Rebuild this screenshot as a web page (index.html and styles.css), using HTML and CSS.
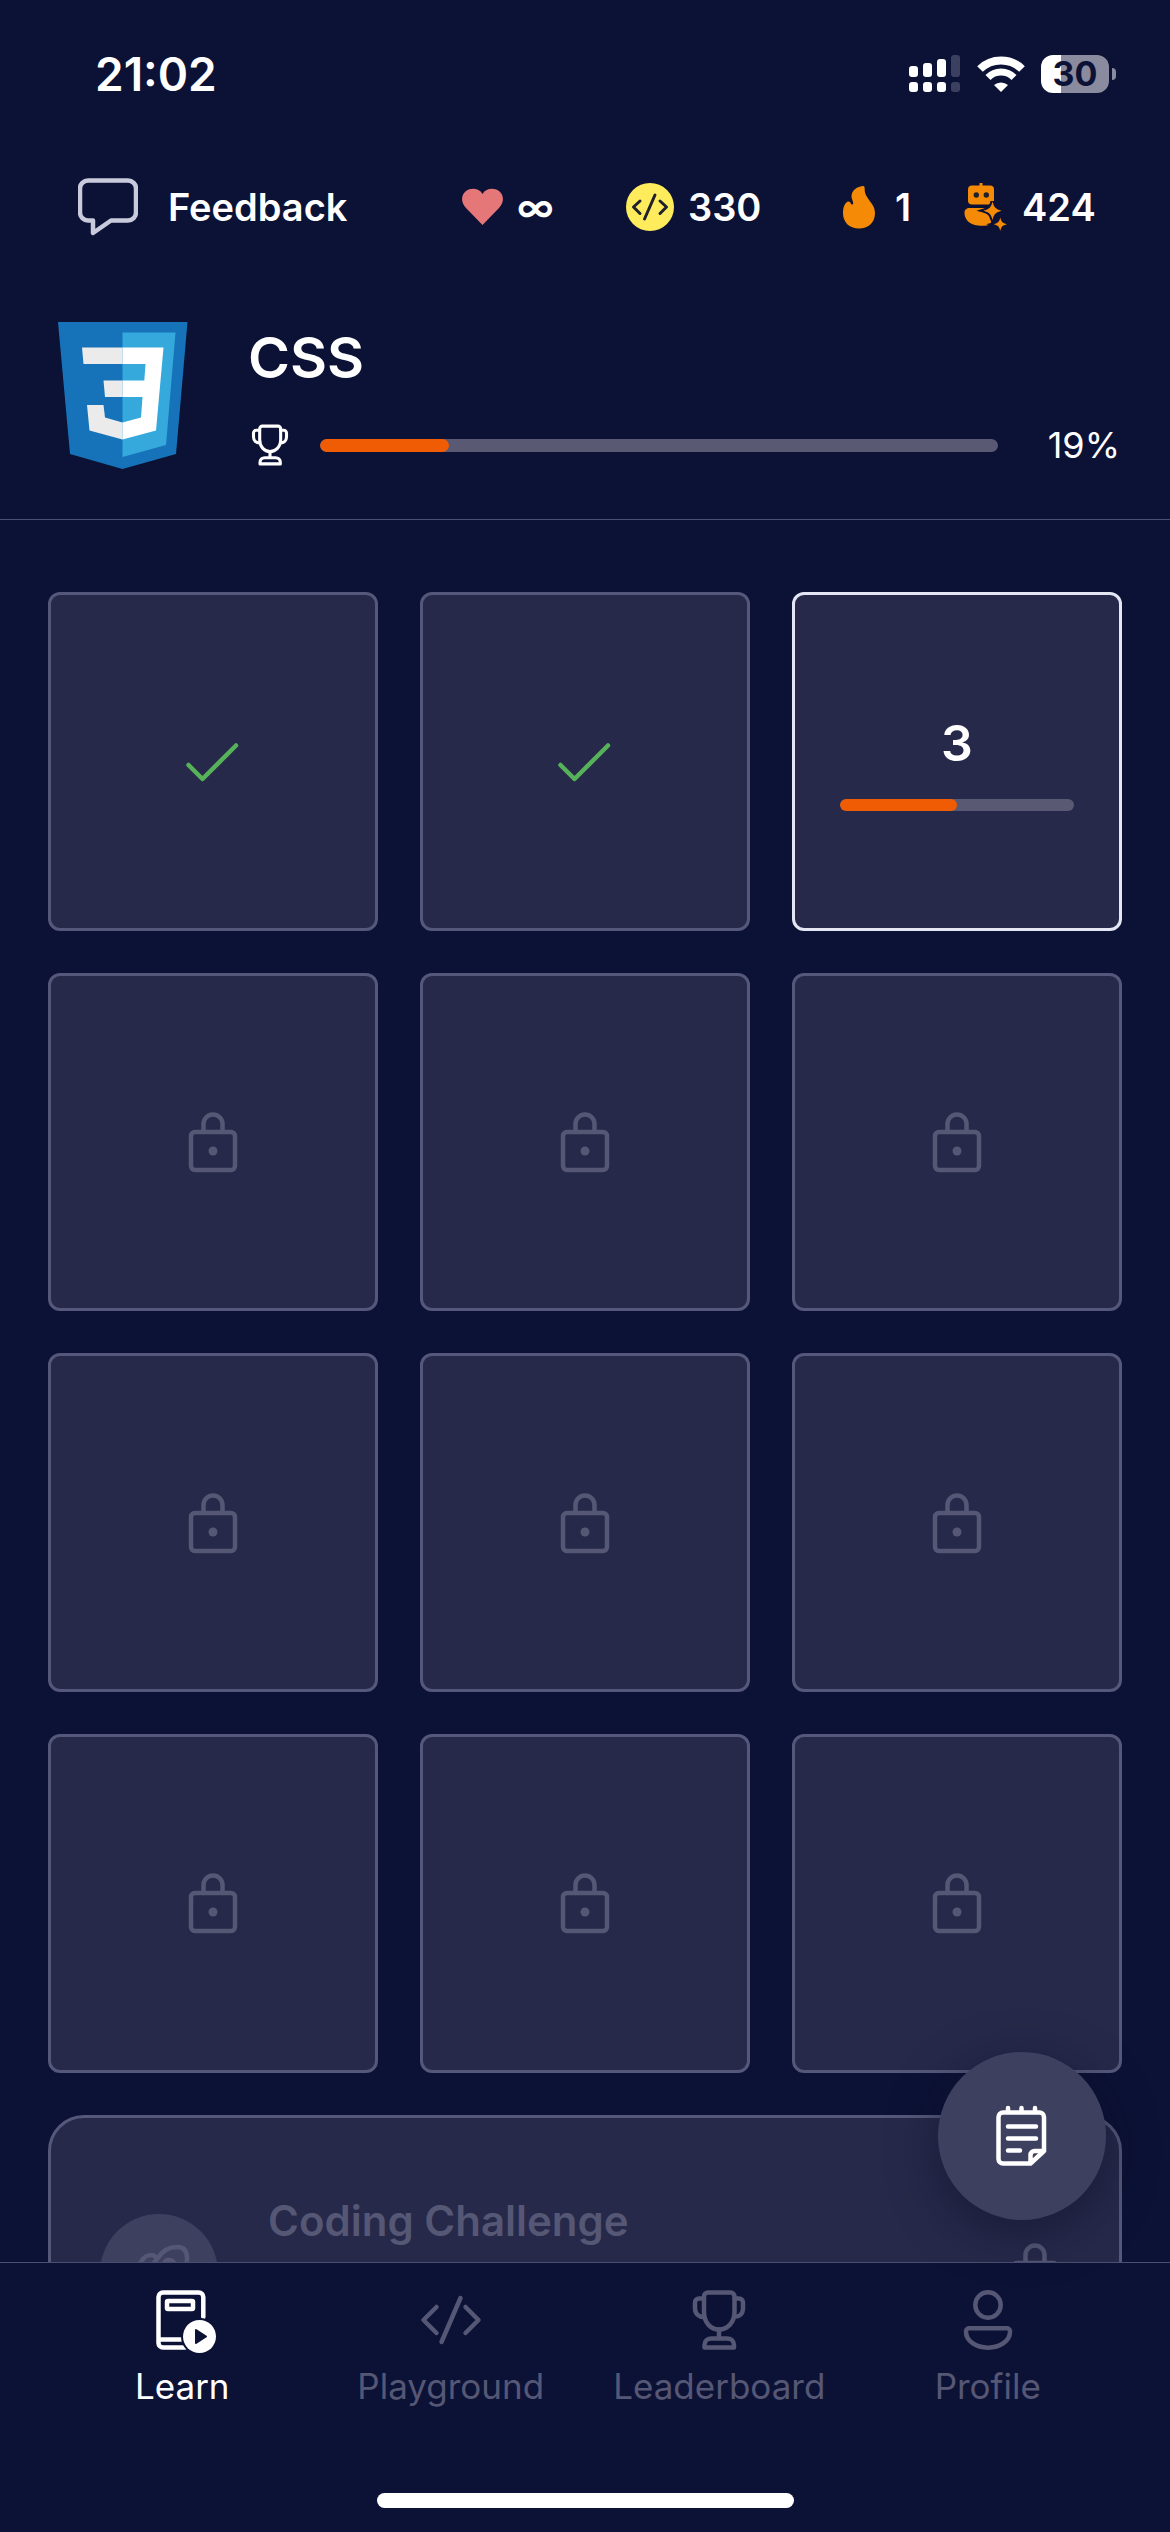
FILE: index.html
```html
<!DOCTYPE html>
<html lang="en">
<head>
  <meta charset="UTF-8" />
  <meta name="viewport" content="width=device-width, initial-scale=1.0" />
  <title>CSS course</title>
  <link rel="stylesheet" href="styles.css">
</head>
<body>
  <!-- shared icons -->
  <svg class="sprite" aria-hidden="true">
    <symbol id="lock" viewBox="0 0 64 64">
      <rect x="10" y="22" width="44" height="38" rx="4" />
      <path d="M22.500 22V14a9.500 9.500 0 0 1 19 0v8" />
      <circle cx="32" cy="41" r="4.500" fill="currentColor" stroke="none" />
    </symbol>
    <symbol id="check" viewBox="0 0 64 64">
      <path d="M7.500 36L21.500 50L55 16.500" />
    </symbol>
    <symbol id="trophy" viewBox="0 0 64 64">
      <path d="M21 4.500H43.500a4 4 0 0 1 4 4V24C47.500 35 40 41.500 32 41.500S17 35 17 24V8.500a4 4 0 0 1 4-4z" />
      <path d="M17 10.500H12a4 4 0 0 0-4 4V20c0 6 4 9 9 9M47.500 10.500H52a4 4 0 0 1 4 4V20c0 6-4 9-8.500 9M32 41.500V50" />
      <path d="M17.500 59.500V57c0-4 3-6.500 7-6.500H40c4 0 7 2.500 7 6.500v2.500z" />
    </symbol>
  </svg>

  <div class="app">
    <div class="status-bar">
      <span class="time">21:02</span>
      <div class="status-icons">
        <svg width="52" height="38" viewBox="0 0 52 38" fill="#fff" aria-hidden="true">
          <rect x="0" y="11" width="9" height="11" rx="3" />
          <rect x="14" y="8" width="9" height="14" rx="3" />
          <rect x="28" y="4" width="9" height="18" rx="3" />
          <rect x="42" y="0" width="9" height="22" rx="3" fill="#3c4060" />
          <rect x="0" y="27" width="9" height="10" rx="3" />
          <rect x="14" y="27" width="9" height="10" rx="3" />
          <rect x="28" y="27" width="9" height="10" rx="3" />
          <rect x="42" y="27" width="9" height="10" rx="3" fill="#3c4060" />
        </svg>
        <svg width="48" height="38" viewBox="0 0 48 38" fill="none" stroke="#fff" aria-hidden="true">
          <path stroke-width="8" d="M3 14A30 30 0 0 1 45 14" />
          <path stroke-width="7" d="M11 22.500A18 18 0 0 1 37 22.500" />
          <path fill="#fff" stroke="none" d="M24 37L17 30A11 11 0 0 1 31 30Z" />
        </svg>
        <div class="battery"><span class="battery-level">30</span></div>
      </div>
    </div>

    <div class="stats">
      <button class="stat feedback" type="button">
        <svg width="60" height="58" viewBox="0 0 60 58" fill="none" stroke="#c9cbdd" stroke-width="4.500" stroke-linejoin="round" aria-hidden="true">
          <path d="M10 2.500H50a8 8 0 0 1 8 8V34.500a8 8 0 0 1-8 8H33L15 55V42.500H10a8 8 0 0 1-8-8V10.500a8 8 0 0 1 8-8z" />
        </svg>
        Feedback
      </button>
      <div class="stat">
        <svg width="41" height="38" viewBox="0 0 41 38" fill="#e57779" aria-hidden="true">
          <path d="M20.500 37L4 20C-1.500 14 -1 7 4 3C9 -.5 17 0 20.500 6C24 0 32 -.5 37 3C42 7 42.500 14 37 20Z" />
        </svg>
        <span>∞</span>
      </div>
      <div class="stat">
        <svg width="48" height="48" viewBox="0 0 48 48" aria-hidden="true">
          <circle cx="24" cy="24" r="24" fill="#ffec5c" />
          <path d="M14 18L7.500 24L14 30.500M34 18L40.500 24L34 30.500M29 12L18.500 36" fill="none" stroke="#20202c" stroke-width="3" stroke-linecap="round" stroke-linejoin="round" />
        </svg>
        <span>330</span>
      </div>
      <div class="stat streak">
        <svg width="32" height="43" viewBox="0 0 32 43" fill="#f48a06" aria-hidden="true">
          <path d="M20.500 0C22 0 21.500 3 22 6.500C24 14 32 18 32 27C32 37 25 42.500 16 42.500C6 42.500 0 36 0 27C0 21 2 16.500 5 15.500C8.500 15 7 19 9.500 18.500C11.500 17 8.500 14 8.500 10C9 4 14 .5 20.500 0Z" />
        </svg>
        <span>1</span>
      </div>
      <div class="stat">
        <svg width="44" height="48" viewBox="0 0 44 48" fill="#f48a06" aria-hidden="true">
          <rect x="15.500" y="0" width="3" height="4" />
          <rect x="4" y="2.500" width="26" height="19" rx="4" />
          <circle cx="12.300" cy="12" r="2.700" fill="#20202c" />
          <circle cx="22.300" cy="12" r="2.700" fill="#20202c" />
          <path d="M6 25H27V41.500C23 42.800 18 43 14 42.500C5 41.500 .5 36 .5 30C.5 26.500 2.500 25 6 25Z" />
          <g stroke="#0c1235" stroke-width="4" paint-order="stroke">
            <path d="M28.500 18.500C30 24.500 31.500 26 37.500 27.700C31.500 29.500 30 31 28.500 37C27 31 25.500 29.500 19.500 27.700C25.500 26 27 24.500 28.500 18.500Z" />
            <path d="M36.300 34.500C37.300 39 38.500 40 43 41.200C38.500 42.300 37.300 43.500 36.300 48C35.300 43.500 34 42.300 29.800 41.200C34 40 35.300 39 36.300 34.500Z" />
          </g>
        </svg>
        <span>424</span>
      </div>
    </div>

    <header class="course">
      <svg width="130" height="147" viewBox="0 0 130 147" aria-hidden="true">
        <path fill="#1773b9" d="M0 0H129.500L118 132L64.500 147L12 132Z" />
        <path fill="#35a9dc" d="M64.500 10.500H117.500L108 123L64.500 135Z" />
        <path fill="#ebebeb" d="M24 25.500H64.500V42H25.500ZM45.500 58.500H64.500V75H47ZM29 83H45.500L47 95.500L64.500 100.500V117.500L31.500 108.500Z" />
        <path fill="#fff" d="M64.500 25.500H105.500L98 108.500L64.500 117.500V100.500L83 95.500L84.500 75H64.500V58.500H86.300L87.500 42H64.500Z" />
      </svg>
      <div class="course-info">
        <h1>CSS</h1>
        <div class="course-progress">
          <svg class="icon icon-small"><use href="#trophy" /></svg>
          <div class="bar" role="progressbar" aria-label="Course progress" aria-valuenow="19">
            <div class="bar-fill" style="width: 19%"></div>
          </div>
          <span class="percent">19%</span>
        </div>
      </div>
    </header>

    <div class="content">
      <main class="lessons">
        <div class="grid">
          <button class="card done" type="button" aria-label="Lesson 1"><svg class="icon"><use href="#check" /></svg></button>
          <button class="card done" type="button" aria-label="Lesson 2"><svg class="icon"><use href="#check" /></svg></button>
          <button class="card current" type="button">
            <span class="number">3</span>
            <span class="bar" role="progressbar" aria-label="Lesson progress" aria-valuenow="50">
              <span class="bar-fill" style="width: 50%"></span>
            </span>
          </button>
          <button class="card" type="button" aria-label="Lesson 4"><svg class="icon"><use href="#lock" /></svg></button>
          <button class="card" type="button" aria-label="Lesson 5"><svg class="icon"><use href="#lock" /></svg></button>
          <button class="card" type="button" aria-label="Lesson 6"><svg class="icon"><use href="#lock" /></svg></button>
          <button class="card" type="button" aria-label="Lesson 7"><svg class="icon"><use href="#lock" /></svg></button>
          <button class="card" type="button" aria-label="Lesson 8"><svg class="icon"><use href="#lock" /></svg></button>
          <button class="card" type="button" aria-label="Lesson 9"><svg class="icon"><use href="#lock" /></svg></button>
          <button class="card" type="button" aria-label="Lesson 10"><svg class="icon"><use href="#lock" /></svg></button>
          <button class="card" type="button" aria-label="Lesson 11"><svg class="icon"><use href="#lock" /></svg></button>
          <button class="card" type="button" aria-label="Lesson 12"><svg class="icon"><use href="#lock" /></svg></button>
        </div>

        <section class="challenge">
          <div class="challenge-icon">
            <svg class="icon" viewBox="0 0 64 64">
              <path d="M31 17C36 9 43 6 50 6C58 6 60 11 60 17C60 30 50 40 38 48L20 36C22 28 26 22 31 17Z" />
              <path d="M30 17C27 13 20 13 16 18L8 30L20 34" />
              <circle cx="42" cy="25" r="6" />
            </svg>
          </div>
          <h2>Coding Challenge</h2>
          <svg class="icon"><use href="#lock" /></svg>
        </section>
      </main>

      <button class="fab" type="button" aria-label="Notes">
        <svg class="icon" viewBox="0 0 64 64">
          <path d="M54 47L40.500 59.500H13a4.500 4.500 0 0 1-4.500-4.500V13a4.500 4.500 0 0 1 4.500-4.500H49.500a4.500 4.500 0 0 1 4.500 4.500V47M40.500 58V51a4 4 0 0 1 4-4H54" />
          <path d="M18 4V8M31.500 4V8M45 4V8M18 22.500H46M18 34.500H46M18 46.500H30" />
        </svg>
      </button>
    </div>

    <nav class="tabs">
      <a class="tab active" href="#learn">
        <svg class="icon" viewBox="0 0 64 64">
          <path d="M53.300 29V9a4.500 4.500 0 0 0-4.500-4.500H13A4.500 4.500 0 0 0 8.500 9V55a4.500 4.500 0 0 0 4.500 4.500H35M9 51.500H31" />
          <rect x="17" y="13" width="26" height="8" rx="1" />
          <circle cx="49.500" cy="48.500" r="16.500" fill="currentColor" stroke="#0c1235" stroke-width="4" paint-order="stroke" />
          <path d="M46 42L56 48.500L46 55Z" fill="#0c1235" stroke="#0c1235" stroke-width="2" />
        </svg>
        Learn
      </a>
      <a class="tab" href="#playground">
        <svg class="icon" viewBox="0 0 64 64">
          <path d="M17.500 19L4.500 32L17.500 45M46.500 19L59.500 32L46.500 45M41.500 10L22.500 54" />
        </svg>
        Playground
      </a>
      <a class="tab" href="#leaderboard">
        <svg class="icon"><use href="#trophy" /></svg>
        Leaderboard
      </a>
      <a class="tab" href="#profile">
        <svg class="icon" viewBox="0 0 64 64">
          <circle cx="32" cy="17" r="12.700" />
          <path d="M13 40.300H51a3 3 0 0 1 3 3.500C54 53 44 59.700 32 59.700S10 53 10 43.800a3 3 0 0 1 3-3.500z" />
        </svg>
        Profile
      </a>
    </nav>
    <div class="home-indicator"></div>
  </div>
</body>
</html>
```
FILE: styles.css
```css
* {
  box-sizing: border-box;
}

body {
  margin: 0;
  font-family: Inter, "Liberation Sans", sans-serif;
  background: #0c1235;
  color: #fff;
}

button {
  font: inherit;
  color: inherit;
  background: none;
  border: none;
  padding: 0;
  cursor: pointer;
}

h1, h2 {
  margin: 0;
  font-weight: 600;
}

.sprite {
  display: none;
}

.icon {
  width: 64px;
  height: 64px;
  flex: none;
  overflow: visible;
  fill: none;
  stroke: currentColor;
  stroke-width: 4.5;
  stroke-linecap: round;
  stroke-linejoin: round;
}

.icon-small {
  width: 44px;
  height: 44px;
}

.app {
  display: flex;
  flex-direction: column;
  height: 100vh;
}

/* status bar */
.status-bar {
  display: flex;
  justify-content: space-between;
  align-items: center;
  height: 148px;
  flex: none;
  padding: 0 54px 0 95px;
}

.time {
  font-size: 46px;
  font-weight: 600;
}

.status-icons {
  display: flex;
  align-items: center;
  gap: 16px;
}

.battery {
  display: flex;
  align-items: center;
  gap: 3px;
}

.battery-level {
  width: 68px;
  line-height: 38px;
  border-radius: 12px;
  background: linear-gradient(to right, #fff 30%, #8a8b9e 30%);
  color: #0c1235;
  font-size: 34px;
  font-weight: 700;
  text-align: center;
}

.battery::after {
  content: "";
  width: 4px;
  height: 12px;
  border-radius: 0 6px 6px 0;
  background: #8a8b9e;
}

/* counters */
.stats {
  display: grid;
  grid-template-columns: 384fr 164fr 217fr 121fr 134fr;
  align-items: center;
  height: 118px;
  flex: none;
  padding: 0 72px 0 78px;
}

.stat {
  display: flex;
  align-items: center;
  gap: 14px;
  font-size: 38px;
  font-weight: 600;
}

.feedback {
  gap: 30px;
}

.streak {
  gap: 20px;
}

/* course header */
.course {
  display: flex;
  gap: 60px;
  padding: 56px 50px 50px 58px;
  border-bottom: 1px solid #4b4f72;
}

.course-info {
  display: flex;
  flex-direction: column;
  justify-content: space-between;
  flex: 1;
}

h1 {
  font-size: 57px;
  line-height: 72px;
}

.course-progress {
  display: flex;
  align-items: center;
  gap: 28px;
  line-height: 48px;
}

.bar {
  flex: 1;
  height: 13px;
  border-radius: 7px;
  background: #595973;
  overflow: hidden;
}

.bar-fill {
  display: block;
  height: 100%;
  border-radius: 7px;
  background: #f05c03;
}

.percent {
  width: 94px;
  font-size: 36px;
  text-align: right;
}

/* lessons */
.content {
  position: relative;
  flex: 1;
  min-height: 0;
}

.lessons {
  height: 100%;
  padding: 72px 48px 0;
  overflow: hidden;
}

.grid {
  display: grid;
  grid-template-columns: repeat(3, 1fr);
  gap: 42px;
}

.card {
  display: flex;
  flex-direction: column;
  align-items: center;
  justify-content: center;
  aspect-ratio: 38 / 39;
  border: 3px solid #55587a;
  border-radius: 12px;
  background: #262949;
  color: #555775;
}

.done {
  color: #56b159;
}

.current {
  border-color: #e4e6f4;
  color: #fff;
  gap: 24px;
}

.current .bar {
  flex: none;
  width: 72%;
  height: 12px;
}

.number {
  font-size: 50px;
  font-weight: 600;
  line-height: 64px;
}

.challenge {
  display: flex;
  align-items: center;
  gap: 50px;
  min-height: 316px;
  margin-top: 42px;
  padding: 76px 52px 76px 49px;
  border: 3px solid #55587a;
  border-radius: 36px;
  background: #262949;
  color: #555775;
}

.challenge-icon {
  display: flex;
  align-items: center;
  justify-content: center;
  width: 118px;
  height: 118px;
  border-radius: 50%;
  background: #3e405f;
}

h2 {
  flex: 1;
  align-self: stretch;
  font-size: 42px;
  line-height: 54px;
}

.fab {
  position: absolute;
  right: 64px;
  bottom: 42px;
  display: flex;
  align-items: center;
  justify-content: center;
  width: 168px;
  height: 168px;
  border-radius: 50%;
  background: #3e405f;
  box-shadow: 0 12px 48px rgba(12, 14, 40, 0.5);
}

/* bottom tabs */
.tabs {
  display: grid;
  grid-template-columns: repeat(4, 1fr);
  padding: 25px 48px 0;
  border-top: 1px solid #4b4f72;
}

.tab {
  display: flex;
  flex-direction: column;
  align-items: center;
  gap: 12px;
  color: #555775;
  font-size: 35px;
  line-height: 44px;
  text-decoration: none;
}

.active {
  color: #fff;
}

.home-indicator {
  flex: none;
  width: 417px;
  height: 15px;
  margin: 85px auto 24px;
  border-radius: 8px;
  background: #fff;
}
```
